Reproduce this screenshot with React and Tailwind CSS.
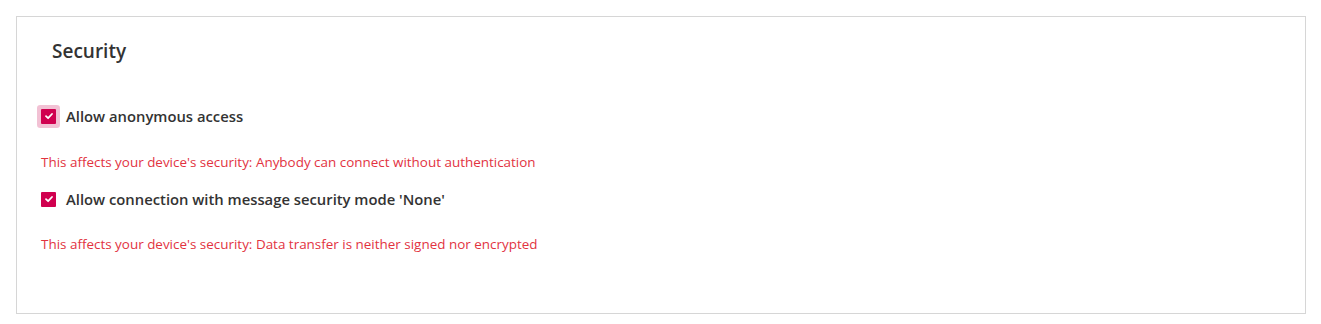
import React from "react";

function Check({ focused }) {
  return (
    <span
      className={
        "flex h-[15px] w-[15px] items-center justify-center rounded-[1px] bg-[#d0004f] " +
        (focused ? "ring-4 ring-[#f2c1d4]" : "")
      }
    >
      <svg width="10" height="10" viewBox="0 0 10 10" fill="none">
        <path d="M2 5.2 L4.1 7.2 L8 3" stroke="white" strokeWidth="1.8" strokeLinecap="round" strokeLinejoin="round" />
      </svg>
    </span>
  );
}

export default function App() {
  return (
    <div className="bg-white w-[1321px] h-[324px] p-4" style={{ fontFamily: "'Open Sans', 'Noto Sans', sans-serif" }}>
      <div className="border border-[#d6d6d6] h-[298px] w-[1290px] px-6">
        <h2 className="pl-[11px] pt-[22px] text-[19px] leading-[24px] font-semibold text-[#333333]">Security</h2>
        <div className="mt-[42px] flex items-center gap-[10px]">
          <Check focused />
          <span className="text-[14.8px] font-semibold text-[#333333]">Allow anonymous access</span>
        </div>
        <p className="mt-[25px] text-[13.45px] leading-[20px] text-[#e2333f]">This affects your device's security: Anybody can connect without authentication</p>
        <div className="mt-[16px] flex items-center gap-[10px]">
          <Check />
          <span className="text-[14.8px] font-semibold text-[#333333]">Allow connection with message security mode 'None'</span>
        </div>
        <p className="mt-[24px] text-[13.45px] leading-[20px] text-[#e2333f]">This affects your device's security: Data transfer is neither signed nor encrypted</p>
      </div>
    </div>
  );
}
